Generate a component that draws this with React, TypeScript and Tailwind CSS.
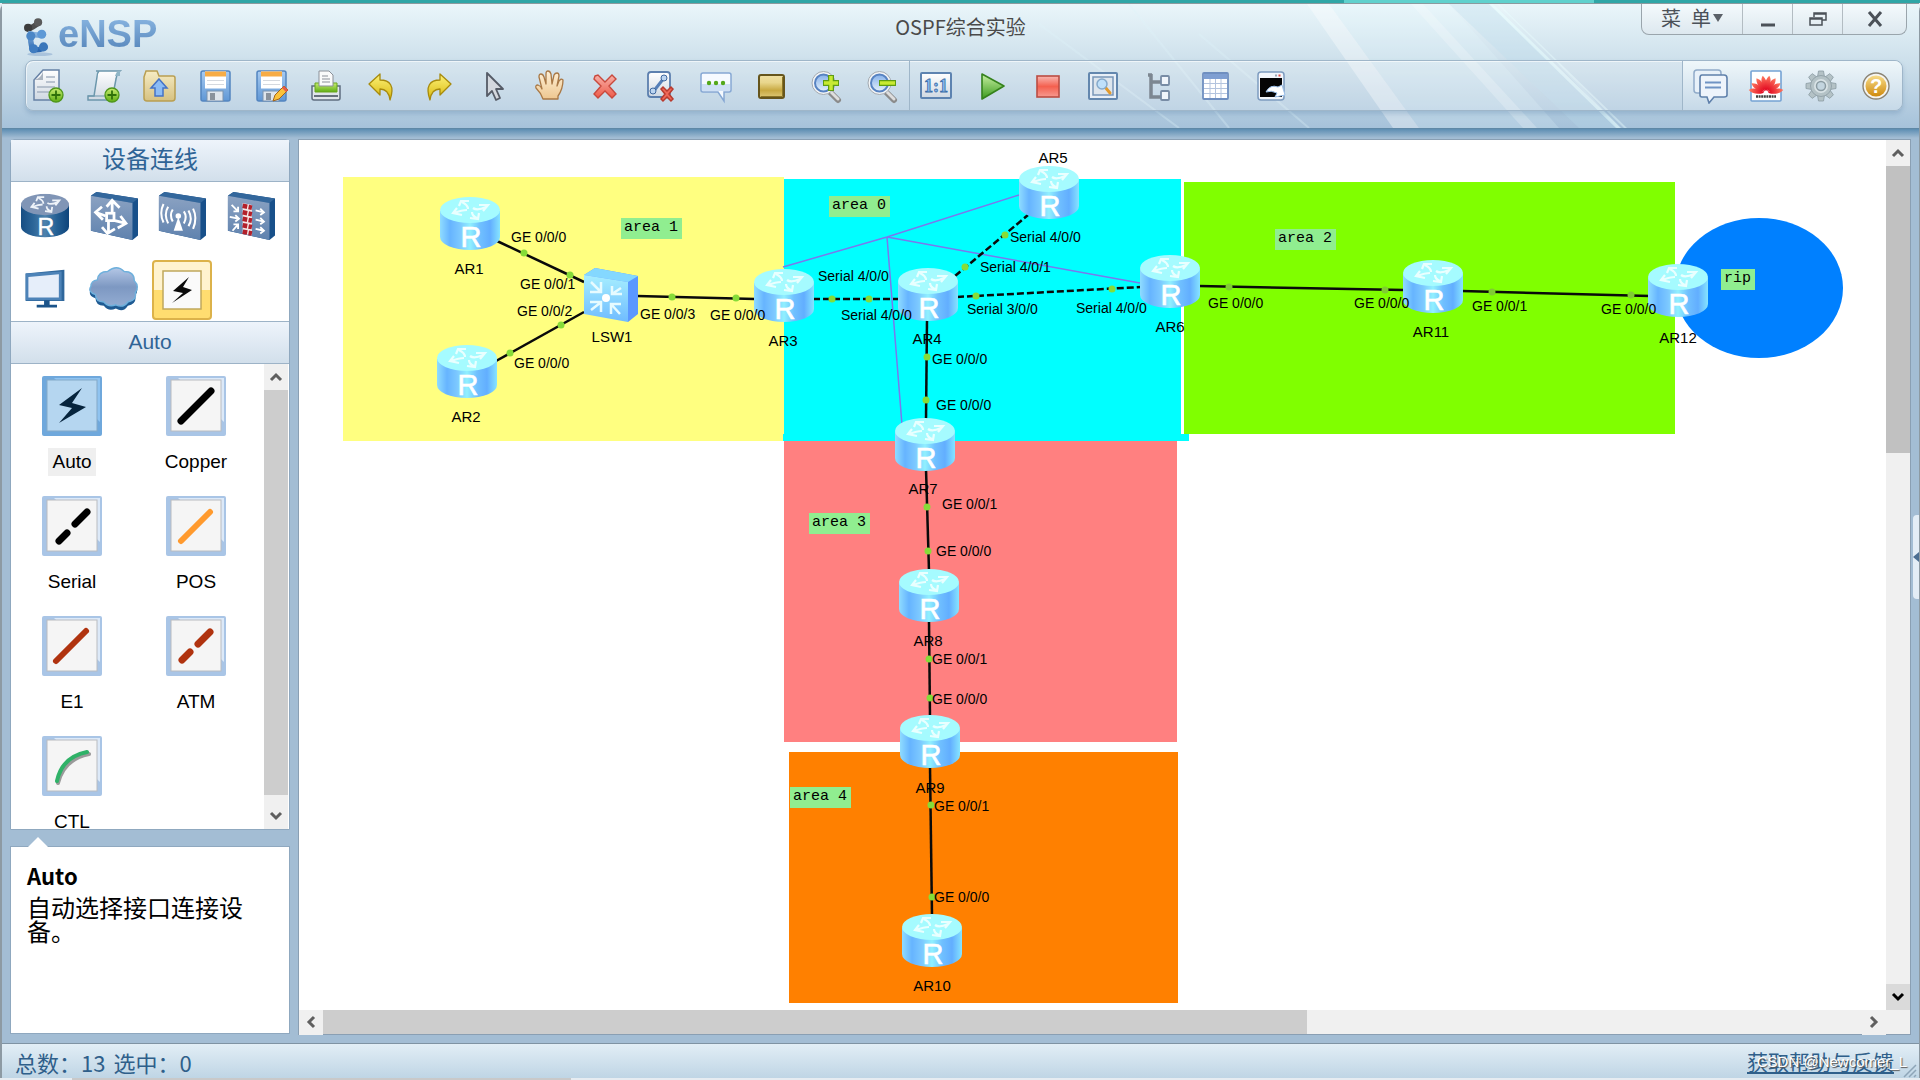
import React from "react";

type Glyph = { name: string; art: React.ReactNode };

/* Gradients shared by every drawing on the page */
function SharedGradients() {
  const vertical = (id: string, stops: string[]) => (
    <linearGradient id={id} x1="0" y1="0" x2="0" y2="1">
      {stops.map((c, i) => (
        <stop key={i} offset={i / (stops.length - 1)} stopColor={c} />
      ))}
    </linearGradient>
  );
  const horizontal = (id: string, stops: string[]) => (
    <linearGradient id={id} x1="0" y1="0" x2="1" y2="0">
      {stops.map((c, i) => (
        <stop key={i} offset={i / (stops.length - 1)} stopColor={c} />
      ))}
    </linearGradient>
  );
  return (
    <svg width="0" height="0" className="absolute" aria-hidden="true">
      <defs>
        {vertical("gPaper", ["#ffffff", "#cfd8e2"])}
        {vertical("gGreen", ["#c8ec70", "#5fae14"])}
        {vertical("gFolder", ["#f6ecc4", "#d6c181"])}
        {vertical("gBlue", ["#a9cbf0", "#5f97d6"])}
        {vertical("gYellow", ["#fdf27a", "#d8b80c"])}
        {vertical("gSkin", ["#fff0d6", "#eec790"])}
        {vertical("gRed", ["#f7b0a8", "#ee5a49"])}
        {vertical("gPlay", ["#c9f0a4", "#3a9a1c"])}
        {vertical("gGold", ["#f0e0a4", "#e8d68c", "#c8a941", "#e0cb7c"])}
        {vertical("gStop", ["#f9b7b1", "#f4604f", "#f79a90"])}
        {vertical("gLens", ["#86b1ea", "#e4f1fb"])}
        {vertical("gHelp", ["#f7dc8a", "#cf8a0d"])}
        {vertical("gHuawei", ["#ff7a60", "#e0001c"])}
        {vertical("gLogo", ["#86b2de", "#2c67b0"])}
        {vertical("gCloud", ["#b4c7e6", "#7d98c2", "#93acd2"])}
        {vertical("gDevice", ["#8ba2c2", "#5f82ae"])}
        {horizontal("gBodyLight", ["#8fdcff", "#66b4ff", "#7cc8ff", "#90f0ff", "#70c0ff", "#62aeff", "#86e4ff"])}
        {horizontal("gBodyDark", ["#174e83", "#2b6598", "#4d82ad", "#245f93", "#0e447b"])}
        {vertical("gSwitchLight", ["#a6eeff", "#6fbcff"])}
      </defs>
    </svg>
  );
}

const disk = (
  <>
    <rect x="4" y="3" width="29" height="30" rx="2" fill="url(#gBlue)" stroke="#5385c0" strokeWidth="1.5" />
    <rect x="8" y="3.500" width="21" height="17" fill="#fff" />
    <rect x="8" y="3.500" width="21" height="5" fill="#f7ac45" />
    <path d="M10 12.500h17M10 16.500h17" stroke="#d5d9df" />
    <rect x="10" y="23" width="16" height="10" fill="#dfe5ec" stroke="#7a93b0" />
    <rect x="13" y="25" width="5" height="7" fill="#8a929c" />
  </>
);
const plusBadge = (
  <>
    <circle cx="26" cy="27" r="7" fill="url(#gGreen)" stroke="#4f961a" strokeWidth="1.300" />
    <path d="M26 22.500v9M21.500 27h9" stroke="#2f7009" strokeWidth="1.800" />
  </>
);
const lens = (
  <>
    <path d="M20 23l9 9" stroke="#8b8b8b" strokeWidth="6" strokeLinecap="round" />
    <path d="M21 23l8 8" stroke="#dedede" strokeWidth="3" strokeLinecap="round" />
    <circle cx="14.500" cy="15" r="11.500" fill="#f2f4f6" stroke="#a2a9b0" />
    <circle cx="14.500" cy="15" r="8.500" fill="url(#gLens)" stroke="#5783c2" strokeWidth="2" />
  </>
);

const editTools: Glyph[] = [
  {
    name: "新建拓扑",
    art: (
      <>
        <path d="M13 2h16v30H4V12z" fill="url(#gPaper)" stroke="#6681a5" strokeWidth="1.500" />
        <path d="M13 2v10H4c5-1 9-5 9-10z" fill="#a9b3bf" />
        <path d="M16 9h9M16 14h9M7 19h18M7 24h12" stroke="#a7b2c2" strokeWidth="1.500" />
        {plusBadge}
      </>
    ),
  },
  {
    name: "新建试卷",
    art: (
      <>
        <path d="M10 3h24q-3 2-4 8l-4 21H2v-4h6L11 9q0-4 2-6z" fill="url(#gPaper)" stroke="#6c97ac" strokeWidth="1.500" />
        <path d="M29 8q2-6 5-5v5z" fill="#8fb5c6" />
        <path d="M2 28h18" stroke="#6c97ac" />
        {plusBadge}
      </>
    ),
  },
  {
    name: "打开",
    art: (
      <>
        <path d="M3 9l2-6h11l2 5h14q2 0 2 2v20q0 3-3 3H6q-3 0-3-3z" fill="url(#gFolder)" stroke="#b99f52" strokeWidth="1.500" />
        <path d="M18 11l8 9h-4v8h-8v-8h-4z" fill="#8cbcf5" stroke="#4573c6" strokeWidth="1.500" />
      </>
    ),
  },
  { name: "保存", art: disk },
  {
    name: "另存为",
    art: (
      <>
        {disk}
        <path d="M20 33l2-6 9-9 4 4-9 9z" fill="#fbc23a" stroke="#a3641a" />
        <path d="M31 18l4 4-2 2-4-4z" fill="#e65b4b" />
      </>
    ),
  },
  {
    name: "打印",
    art: (
      <>
        <path d="M4 18h28v12q0 2-2 2H6q-2 0-2-2z" fill="#e0e5eb" stroke="#5f6d80" strokeWidth="1.500" />
        <path d="M7 15h22v9H7z" fill="url(#gGreen)" stroke="#6ba51f" />
        <path d="M11 3h10l4 4v11H11z" fill="#fafafa" stroke="#8b9098" />
        <path d="M14 8h6M14 11h8M14 14h8" stroke="#8b9098" />
        <path d="M6 28h24" stroke="#66707d" strokeWidth="2" />
      </>
    ),
  },
  {
    name: "撤销",
    art: <path d="M5 16L16 6v6c10 0 15 6 10 20-1-8-4-11-10-11v6z" fill="url(#gYellow)" stroke="#a78a0c" strokeWidth="1.300" strokeLinejoin="round" />,
  },
  {
    name: "恢复",
    art: <path d="M31 16L20 6v6C10 12 5 18 10 32c1-8 4-11 10-11v6z" fill="url(#gYellow)" stroke="#a78a0c" strokeWidth="1.300" strokeLinejoin="round" />,
  },
  {
    name: "选择",
    art: <path d="M12 5v23l5-5 4 9 4-2-4-9h7z" fill="#d4d8de" stroke="#555b66" strokeWidth="1.800" strokeLinejoin="round" />,
  },
  {
    name: "拖动",
    art: (
      <path
        d="M12 31q-2-6-7-11-1-3 2-3 3 1 4 4L8 9q0-3 2-3t3 3l2 7V6q0-3 2-3t3 3l1 10 2-9q1-2 3-2t2 3l-2 10 2-5q2-3 4-1 0 9-5 16v3z"
        fill="url(#gSkin)"
        stroke="#a97845"
        strokeWidth="1.300"
        strokeLinejoin="round"
      />
    ),
  },
  {
    name: "删除",
    art: <path d="M8 8l3-1 7 7 7-7 4 4-7 7 7 8-4 4-7-7-7 7-4-4 7-8-7-7z" fill="url(#gRed)" stroke="#c8493d" strokeWidth="1.400" />,
  },
  {
    name: "删除连线",
    art: (
      <>
        <rect x="6" y="4" width="22" height="25" rx="3" fill="url(#gPaper)" stroke="#5c7fae" strokeWidth="1.800" />
        <path d="M11 24L22 10" stroke="#567fb8" strokeWidth="3" />
        <circle cx="11" cy="23" r="3" fill="#bcd5f1" stroke="#3f689f" />
        <circle cx="22" cy="10" r="3" fill="#bcd5f1" stroke="#3f689f" />
        <path d="M19 21l2-2 4 4 4-4 2 2-4 5 4 5-2 2-4-4-4 4-2-2 4-5z" fill="#ee6758" stroke="#b83a2e" strokeWidth="1.500" />
      </>
    ),
  },
  {
    name: "文本",
    art: (
      <>
        <path d="M5 5h26q2 0 2 2v15q0 2-2 2h-5v9l-6-9H5q-2 0-2-2V7q0-2 2-2z" fill="#f6faff" stroke="#86a8d4" strokeWidth="1.500" />
        <rect x="4" y="16" width="28" height="7" fill="#cfe0f5" />
        <g fill="#54a81c">
          <circle cx="11" cy="15" r="2.200" />
          <circle cx="18" cy="15" r="2.200" />
          <circle cx="25" cy="15" r="2.200" />
        </g>
      </>
    ),
  },
  {
    name: "调色板",
    art: (
      <>
        <rect x="5" y="7" width="25" height="23" rx="2" fill="url(#gGold)" stroke="#66551c" strokeWidth="2" />
        <path d="M7 28.500h21.500V9" fill="none" stroke="#8b7526" />
      </>
    ),
  },
  {
    name: "放大",
    art: (
      <>
        {lens}
        <path d="M22 7v16M14 15h16" stroke="#5f9d13" strokeWidth="6" />
        <path d="M22 8v14M15 15h14" stroke="#c8ea32" strokeWidth="3.500" />
      </>
    ),
  },
  {
    name: "缩小",
    art: (
      <>
        {lens}
        <path d="M14 15h17" stroke="#5f9d13" strokeWidth="6" />
        <path d="M15 15h15" stroke="#c8ea32" strokeWidth="3.500" />
      </>
    ),
  },
];

const runTools: Glyph[] = [
  {
    name: "原始大小",
    art: (
      <>
        <rect x="3" y="5" width="30" height="25" rx="1" fill="url(#gPaper)" stroke="#5d83b0" strokeWidth="2" />
        <text x="18" y="24" textAnchor="middle" fontFamily="Liberation Serif" fontWeight="700" fontSize="18" fill="#8bbcf0" stroke="#3a6ca8" strokeWidth="0.800">
          1:1
        </text>
      </>
    ),
  },
  {
    name: "启动设备",
    art: <path d="M8 6l22 12L8 31z" fill="url(#gPlay)" stroke="#35821c" strokeWidth="1.600" strokeLinejoin="round" />,
  },
  {
    name: "停止设备",
    art: <rect x="7" y="8" width="22" height="21" fill="url(#gStop)" stroke="#bb4d43" strokeWidth="1.600" />,
  },
  {
    name: "数据抓包",
    art: (
      <>
        <rect x="4" y="5" width="28" height="26" rx="1" fill="#e8eff7" stroke="#6387ae" strokeWidth="2" />
        <rect x="8" y="9" width="20" height="18" fill="#dde5ed" stroke="#7896b8" strokeWidth="1.500" />
        <path d="M20 19l5 6" stroke="#e29a2d" strokeWidth="3" strokeLinecap="round" />
        <circle cx="17" cy="16" r="5" fill="#bfe0fa" stroke="#85a9cb" strokeWidth="1.500" />
      </>
    ),
  },
  {
    name: "展示接口",
    art: (
      <>
        <path d="M10 6v23h10M10 14h10M7 7h4" fill="none" stroke="#7d8791" strokeWidth="3.500" />
        <rect x="20" y="8" width="8" height="9" rx="1" fill="#f0f5fb" stroke="#788ca5" strokeWidth="1.800" />
        <rect x="20" y="23" width="8" height="9" rx="1" fill="#f0f5fb" stroke="#788ca5" strokeWidth="1.800" />
      </>
    ),
  },
  {
    name: "显示网格",
    art: (
      <>
        <rect x="6" y="5" width="25" height="26" rx="1" fill="#fff" stroke="#6f8fc0" strokeWidth="1.800" />
        <rect x="7" y="6" width="23" height="5" fill="#7f9fd2" />
        <path d="M7 15.500h23M7 20.500h23M7 25.500h23M13 11v19M18.500 11v19M24 11v19" stroke="#b4c4de" />
      </>
    ),
  },
  {
    name: "打开命令行",
    art: (
      <>
        <rect x="5" y="4" width="26" height="28" rx="3" fill="#f2f6fb" stroke="#7e9cc0" strokeWidth="1.500" />
        <rect x="7" y="10" width="22" height="19" fill="#050505" />
        <path d="M22 7.500h2" stroke="#9aa6b4" strokeWidth="2" />
        <path d="M25.500 7.500h2" stroke="#e64b42" strokeWidth="2" />
        <path d="M13 24q4-8 12-5l4-2 3 10-10 2 2-4q-6-3-11-1z" fill="#fff" stroke="#9cc0ea" />
      </>
    ),
  },
];

const sideTools: Glyph[] = [
  {
    name: "论坛",
    art: (
      <>
        <rect x="1" y="2" width="27" height="23" rx="3" fill="#e8f1f9" stroke="#90abc9" strokeWidth="1.500" />
        <path d="M9 7h22q3 0 3 3v17q0 2-3 2H21l-5 6-2-6H9q-2 0-2-2V10q0-3 2-3z" fill="#eef4fb" stroke="#5f80ab" strokeWidth="1.600" />
        <path d="M12 14.500h16M12 19.500h16" stroke="#6f93c4" strokeWidth="1.800" />
      </>
    ),
  },
  {
    name: "华为官网",
    art: (
      <>
        <rect x="3" y="3" width="30" height="30" rx="1" fill="#fff" stroke="#74a2d4" strokeWidth="1.600" />
        <g fill="url(#gHuawei)">
          {[-80, -56, -33, -11, 11, 33, 56, 80].map((a) => (
            <path key={a} d="M18 23C14.500 17 15 11 18 7.500C21 11 21.500 17 18 23z" transform={`rotate(${a} 18 25)`} />
          ))}
        </g>
        <path d="M8 28.500h20" stroke="#3f3f3f" strokeWidth="2.500" strokeDasharray="2 .6" />
      </>
    ),
  },
  {
    name: "设置",
    art: (
      <>
        <g fill="#b4c2c6" stroke="#8b9ca3" strokeWidth="0.800">
          {[0, 45, 90, 135, 180, 225, 270, 315].map((a) => (
            <path key={a} d="M14.500 9l1-6h5l1 6z" transform={`rotate(${a} 18 18)`} />
          ))}
          <circle cx="18" cy="18" r="10.500" />
        </g>
        <circle cx="18" cy="18" r="7" fill="#d9e3e6" />
        <circle cx="18" cy="18" r="4.500" fill="#c3d5df" stroke="#8b9ca3" strokeWidth="1.500" />
      </>
    ),
  },
  {
    name: "帮助",
    art: (
      <>
        <circle cx="18" cy="18" r="13" fill="#f5f5f2" stroke="#8b8474" strokeWidth="1.400" />
        <circle cx="18" cy="18" r="10.500" fill="url(#gHelp)" />
        <text x="18" y="25" textAnchor="middle" fontFamily="Liberation Sans" fontWeight="700" fontSize="20" fill="#fff">
          ?
        </text>
      </>
    ),
  },
];

function IconButton({ glyph }: { glyph: Glyph }) {
  return (
    <button type="button" aria-label={glyph.name} className="h-9 w-9 shrink-0">
      <svg viewBox="0 0 36 36" className="h-9 w-9">
        {glyph.art}
      </svg>
    </button>
  );
}

function Logo() {
  return (
    <div className="flex items-start gap-0.5 pt-3 pl-5">
      <svg viewBox="0 0 34 44" className="h-10 w-[34px]" aria-hidden="true">
        <ellipse cx="18" cy="42" rx="14" ry="2" fill="#a9c3dc" />
        <path d="M5 14Q10 13 17 7" stroke="#4d4d4d" strokeWidth="6" />
        <circle cx="5" cy="13" r="4.500" fill="#3c3c3c" />
        <circle cx="16" cy="7" r="4.500" fill="#5a5a5a" />
        <path d="M22 20Q16 22 8 20Q7 28 10 37Q17 38 23 35" fill="none" stroke="url(#gLogo)" strokeWidth="6" />
        <circle cx="20" cy="20" r="5" fill="#5e99d6" />
        <circle cx="8" cy="22" r="5" fill="#4a86c6" />
        <circle cx="11" cy="36" r="5" fill="#3f7cc0" />
        <circle cx="22" cy="34" r="5" fill="#3b77ba" />
      </svg>
      <span className="bg-gradient-to-b from-[#8ab6e2] to-[#5685ba] bg-clip-text text-[38px] leading-9 font-bold text-transparent">
        eNSP
      </span>
    </div>
  );
}

function WindowControls() {
  const cell = "flex h-full items-center justify-center border-r border-[#b3bcc2]";
  return (
    <div className="mr-3 flex h-[31px] justify-self-end rounded-b-lg border border-t-0 border-[#9aa5ac] bg-gradient-to-b from-[#f4fafc] to-[#dde8ef] text-[#4b5158]">
      <button type="button" className={`${cell} w-[101px] gap-0.5 pb-0.5 font-['Noto_Sans_CJK_SC',sans-serif] text-xl leading-none`}>
        菜{"\u2002"}单
        <svg viewBox="0 0 10 8" className="h-2 w-2.5" aria-hidden="true">
          <path d="M0 0h10L5 8z" fill="#5b6168" />
        </svg>
      </button>
      <button type="button" aria-label="最小化" className={`${cell} w-[50px]`}>
        <svg viewBox="0 0 16 16" className="mt-1 h-4 w-4">
          <path d="M1 12h14" stroke="#4b5158" strokeWidth="3" />
        </svg>
      </button>
      <button type="button" aria-label="还原" className={`${cell} w-[50px]`}>
        <svg viewBox="0 0 18 16" className="h-4 w-[18px]" fill="none" stroke="#4b5158" strokeWidth="1.500">
          <path d="M5 6V2h12v7h-4M5 3h12" />
          <path d="M1 7h12v7H1zM1 8h12" />
        </svg>
      </button>
      <button type="button" aria-label="关闭" className="flex h-full w-[63px] items-center justify-center">
        <svg viewBox="0 0 16 16" className="h-4 w-4">
          <path d="M2 1l12 14M14 1L2 15" stroke="#4b5158" strokeWidth="3" />
        </svg>
      </button>
    </div>
  );
}

function Header() {
  return (
    <header className="relative border-t border-[#8b9a9e] bg-gradient-to-b from-[#eaf6fa] via-[#cbdeea] to-[#a6c2da] pb-[17px]">
      <svg viewBox="0 0 900 124" preserveAspectRatio="none" className="pointer-events-none absolute top-0 right-0 h-full w-[900px]" aria-hidden="true">
        <path d="M288 0h22l90 124h-26z" fill="#fff" opacity=".35" />
        <path d="M310 0h120l110 124H400z" fill="#e8fbff" opacity=".2" />
        <path d="M392 0h12l114 124h-14z" fill="#fff" opacity=".22" />
        <path d="M430 0h40l130 124H560z" fill="#b8dcea" opacity=".3" />
        <path d="M470 0h4l128 124h-5z" fill="#eaffff" opacity=".5" />
        <path d="M478 0h2l128 124h-3z" fill="#eaffff" opacity=".4" />
        <path d="M20 20l140 104M180 30l110 94M110 0l100 124M540 60l60 64" stroke="#dff4fa" strokeWidth="2" opacity=".3" />
      </svg>
      <div className="relative grid h-14 grid-cols-[1fr_auto_1fr] items-start">
        <Logo />
        <h1 className="pt-[9px] font-['Noto_Sans_CJK_SC',sans-serif] text-xl leading-7 text-[#4a4a4a]">OSPF综合实验</h1>
        <WindowControls />
      </div>
      <div className="relative mr-4 ml-[23px] flex h-[51px] items-center rounded-lg border border-[#9fb6c9] bg-white/20 shadow-[inset_1px_1px_0_rgba(255,255,255,0.6),0_3px_4px_rgba(90,130,170,0.3)]">
        <div className="flex w-[875px] shrink-0 justify-between pl-1">
          {editTools.map((g) => (
            <IconButton key={g.name} glyph={g} />
          ))}
        </div>
        <div className="mr-2 ml-2 h-full w-px shrink-0 bg-[#9fb6c9]" />
        <div className="flex w-[371px] shrink-0 justify-between">
          {runTools.map((g) => (
            <IconButton key={g.name} glyph={g} />
          ))}
        </div>
        <div className="ml-auto flex h-full w-[220px] items-center justify-between rounded-r-lg border-l border-[#9fb6c9] bg-gradient-to-b from-[#eff7fa] to-[#c6d9e8] pr-2 pl-2.5">
          {sideTools.map((g) => (
            <IconButton key={g.name} glyph={g} />
          ))}
        </div>
      </div>
    </header>
  );
}

/* Router symbol: light on the canvas, dark in the palette */
function RouterArt({ dark = false }: { dark?: boolean }) {
  return (
    <>
      <path d="M0 14V40a30 13 0 0 0 60 0V14z" fill={dark ? "url(#gBodyDark)" : "url(#gBodyLight)"} />
      <ellipse cx="30" cy="13" rx="30" ry="13" fill={dark ? "#8095b6" : "#a5fbff"} />
      <g fill="none" stroke={dark ? "#eef3f9" : "#e9ffff"} strokeWidth="2.200">
        <path d="M28 12q0-4-6-7M19 9l2-5 8 0" />
        <path d="M33 11q4 3 13-1M39 8h9l-5 6" />
        <path d="M27 13q-5 0-13 3M17 11l-4 5 9 2" />
        <path d="M32 15q0 4 5 6M30 21l8 1 1-6" />
      </g>
      <text x="31" y="50" textAnchor="middle" fontFamily="Liberation Sans" fontSize="29" fill="#fff" stroke="#fff" strokeWidth="0.600">
        R
      </text>
    </>
  );
}

const darkBox = (
  <>
    <path d="M1 4l6-4 45 7v40l-6 5L1 42z" fill="#18508a" />
    <path d="M1 4l6-4 45 7-6 5z" fill="#33679c" />
    <path d="M1 4l45 8v40L1 42z" fill="url(#gDevice)" />
  </>
);

const categories: Glyph[] = [
  {
    name: "路由器",
    art: (
      <svg viewBox="0 0 60 54" x="0" y="2" width="52" height="48" preserveAspectRatio="none">
        <RouterArt dark />
      </svg>
    ),
  },
  {
    name: "交换机",
    art: (
      <>
        {darkBox}
        <g fill="none" stroke="#fff" strokeWidth="3">
          <path d="M24 22V11M18 16l6-7 8 8M27 31l12 3M33 26l6 8-9 5M20 31v14M13 38l6 7 8-5M17 26L6 22M13 16l-7 6 8 8" />
          <rect x="18" y="23" width="8" height="8" />
        </g>
      </>
    ),
  },
  {
    name: "无线局域网",
    art: (
      <>
        {darkBox}
        <path d="M22 27l5 15H17z" fill="#fff" />
        <circle cx="22" cy="26" r="3" fill="#fff" />
        <path d="M16 19q-4 6 0 13M11 16q-5 8 0 18M6 13q-5 10 0 20M28 21q4 6 0 13M33 20q5 9 0 17M38 18q5 10 0 22" fill="none" stroke="#fff" strokeWidth="2.200" />
      </>
    ),
  },
  {
    name: "防火墙",
    art: (
      <>
        {darkBox}
        <path d="M17 12l10 2v33l-10-2z" fill="#f4e7e7" />
        <path d="M17 15l10 2M17 22l10 2M17 29l10 2M17 36l10 2M17 43l10 2" stroke="#b3202a" strokeWidth="5" strokeDasharray="5 1.500" />
        <path d="M5 14l7 7M12 16v5H7M3 27l10 2M9 25l4 4-4 3M6 42l6-7M7 35h5v5M31 20l9 2M36 18l4 4-4 3M31 30l9 2M36 28l4 4-4 3M31 40l9 2M36 38l4 4-4 3" fill="none" stroke="#fff" strokeWidth="2" />
      </>
    ),
  },
  {
    name: "终端",
    art: (
      <>
        <path d="M5 8l42-4v34H5z" fill="#2f679c" />
        <path d="M5 8l39-2v31H5z" fill="#4d83b8" />
        <path d="M8 12l33-3v25H8z" fill="#e6eefa" />
        <path d="M25 37h6v5h8v3H17v-3h8z" fill="#1b548a" />
      </>
    ),
  },
  {
    name: "其他设备",
    art: (
      <>
        <path
          d="M8 15q1-9 11-9 10-8 18 0 11 0 11 10 6 6 1 13 2 9-8 11-5 8-13 3-8 4-13-3-9 0-9-8-9-3-5-10 0-6 7-7z"
          fill="#1f5b93"
          transform="translate(0 3)"
        />
        <path
          d="M8 15q1-9 11-9 10-8 18 0 11 0 11 10 6 6 1 13 2 8-8 10-5 7-13 3-8 3-13-3-9 0-9-8-9-3-5-9 0-6 7-7z"
          fill="url(#gCloud)"
          stroke="#6fb0dc"
          strokeWidth="1.500"
        />
      </>
    ),
  },
  {
    name: "设备连线",
    art: (
      <>
        <rect x="7" y="7" width="38" height="38" fill="#fafafa" stroke="#c0a85c" strokeWidth="1.500" />
        <path d="M33 13L17 27l10 2-11 10 20-13-9-3z" fill="#0b0b0b" />
      </>
    ),
  },
];

type Cable = { name: string; art: React.ReactNode; selected?: boolean };
const cables: Cable[] = [
  { name: "Auto", selected: true, art: <path d="M40 12L17 29l13 3-13 15 27-16-14-4z" fill="#06243d" /> },
  { name: "Copper", art: <path d="M15 45L45 15" stroke="#000" strokeWidth="7" strokeLinecap="round" /> },
  { name: "Serial", art: <path d="M17 45l8-8M33 28l12-12" stroke="#000" strokeWidth="7" strokeLinecap="round" /> },
  { name: "POS", art: <path d="M15 45L44 16" stroke="#ff9a2e" strokeWidth="6" strokeLinecap="round" /> },
  { name: "E1", art: <path d="M14 45l30-30" stroke="#b0330f" strokeWidth="6" strokeLinecap="round" /> },
  { name: "ATM", art: <path d="M16 44l8-8M32 28l12-12" stroke="#b0330f" strokeWidth="7" strokeLinecap="round" /> },
  {
    name: "CTL",
    art: (
      <g fill="none" strokeLinecap="round">
        <path d="M16 47q6-24 31-29" stroke="#9a9a9a" strokeWidth="4" />
        <path d="M15 45q5-24 30-29" stroke="#2fb268" strokeWidth="4" />
      </g>
    ),
  },
];

const arrows = {
  up: "M3 11l5-5 5 5",
  down: "M3 5l5 5 5-5",
  left: "M11 3L6 8l5 5",
  right: "M5 3l5 5-5 5",
};

function ScrollArrow({ dir, strong = false }: { dir: keyof typeof arrows; strong?: boolean }) {
  const label = { up: "向上滚动", down: "向下滚动", left: "向左滚动", right: "向右滚动" }[dir];
  return (
    <button
      type="button"
      aria-label={label}
      className={`flex h-[26px] w-6 shrink-0 items-center justify-center ${strong ? "bg-[#dadada]" : "bg-[#f0f0f0]"}`}
    >
      <svg viewBox="0 0 16 16" className="h-4 w-4">
        <path d={arrows[dir]} fill="none" stroke={strong ? "#000" : "#5f5f5f"} strokeWidth="3" />
      </svg>
    </button>
  );
}

function PanelTitle({ children }: { children: React.ReactNode }) {
  return (
    <h2 className="h-[42px] shrink-0 border-b border-[#9db3c7] bg-gradient-to-b from-[#eef4fb] to-[#d2dfeb] text-center font-['Liberation_Sans','Noto_Sans_CJK_SC',sans-serif] leading-10 text-[#2f6496]">
      {children}
    </h2>
  );
}

function Sidebar() {
  return (
    <aside className="flex w-[280px] shrink-0 flex-col">
      <section className="flex min-h-0 flex-1 flex-col rounded-t border border-[#8fa8bf] bg-white">
        <PanelTitle>
          <span className="text-2xl leading-10">设备连线</span>
        </PanelTitle>
        <div className="grid shrink-0 grid-cols-4 border-b border-[#9db3c7] pt-1 pr-1">
          {categories.map((c) => {
            const on = c.name === "设备连线";
            return (
              <button
                key={c.name}
                type="button"
                aria-label={c.name}
                aria-pressed={on}
                className={`mb-3.5 flex h-[60px] w-[60px] items-center justify-center justify-self-center rounded-sm nth-[n+5]:mb-px ${
                  on ? "border-2 border-[#dcb24a] bg-gradient-to-b from-[#fff3cf] from-50% to-[#ffdd70] to-50%" : ""
                }`}
              >
                <svg viewBox="0 0 52 52" className={on ? "h-[52px] w-[52px]" : "h-12 w-[52px]"}>
                  {c.art}
                </svg>
              </button>
            );
          })}
        </div>
        <PanelTitle>
          <span className="text-[21px] leading-10">Auto</span>
        </PanelTitle>
        <div className="flex min-h-0 flex-1">
          <ul className="grid min-w-0 flex-1 basis-0 grid-cols-[122px_126px] content-start overflow-hidden">
            {cables.map((c) => (
              <li key={c.name} className="h-[120px] pt-3 last:h-[114px]">
                <button type="button" aria-pressed={!!c.selected} className="flex w-full flex-col items-center gap-3">
                  <svg viewBox="0 0 60 60" className="h-[60px] w-[60px]" aria-hidden="true">
                    <rect width="60" height="60" rx="2" fill={c.selected ? "#6fa8dc" : "#a9c5e6"} />
                    <path d="M12 2h46v44z" fill={c.selected ? "#8fc3f0" : "#dce9f8"} />
                    <rect x="5" y="4" width="50" height="51" fill={c.selected ? "#b5d6f0" : "#f5f5f5"} stroke={c.selected ? "#83a9c8" : "#b9bcc0"} />
                    {c.art}
                  </svg>
                  <span className={`h-7 px-1 text-[19px] leading-7 text-black ${c.selected ? "bg-[#efefef]" : ""}`}>{c.name}</span>
                </button>
              </li>
            ))}
          </ul>
          <div className="mr-px flex flex-col bg-[#f0f0f0]">
            <ScrollArrow dir="up" />
            <div className="w-6 flex-1 bg-[#cdcdcd]" />
            <div className="h-2" />
            <ScrollArrow dir="down" />
          </div>
        </div>
      </section>
      <section className="relative mt-4 mb-px h-[188px] shrink-0 border border-[#8fa8bf] bg-white pt-3.5 pr-10 pl-4 font-['Noto_Sans_CJK_SC',sans-serif] text-black">
        <svg viewBox="0 0 22 12" className="absolute -top-[11px] left-4 h-3 w-[22px]" aria-hidden="true">
          <path d="M0 12L11 1l11 11z" fill="#fff" />
        </svg>
        <h3 className="text-[22px] leading-7 font-bold">Auto</h3>
        <p className="mt-1.5 text-2xl leading-6">自动选择接口连接设备。</p>
      </section>
    </aside>
  );
}

/* Canvas geometry is kept in window coordinates; this is the canvas corner */
const ORIGIN = { x: 299, y: 140 };

const routers = [
  { name: "AR1", x: 470, y: 224, lx: 469, ly: 269 },
  { name: "AR2", x: 467, y: 372, lx: 466, ly: 417 },
  { name: "AR3", x: 784, y: 296, lx: 783, ly: 341 },
  { name: "AR4", x: 928, y: 295, lx: 927, ly: 339 },
  { name: "AR5", x: 1049, y: 193, lx: 1053, ly: 158 },
  { name: "AR6", x: 1170, y: 282, lx: 1170, ly: 327 },
  { name: "AR7", x: 925, y: 445, lx: 923, ly: 489 },
  { name: "AR8", x: 929, y: 596, lx: 928, ly: 641 },
  { name: "AR9", x: 930, y: 742, lx: 930, ly: 788 },
  { name: "AR10", x: 932, y: 941, lx: 932, ly: 986 },
  { name: "AR11", x: 1433, y: 287, lx: 1431, ly: 332 },
  { name: "AR12", x: 1678, y: 291, lx: 1678, ly: 338 },
];

const ports: [string, number, number][] = [
  ["GE 0/0/0", 511, 237],
  ["GE 0/0/1", 520, 284],
  ["GE 0/0/2", 517, 311],
  ["GE 0/0/0", 514, 363],
  ["GE 0/0/3", 640, 314],
  ["GE 0/0/0", 710, 315],
  ["Serial 4/0/0", 818, 276],
  ["Serial 4/0/0", 841, 315],
  ["Serial 3/0/0", 967, 309],
  ["Serial 4/0/0", 1076, 308],
  ["Serial 4/0/0", 1010, 237],
  ["Serial 4/0/1", 980, 267],
  ["GE 0/0/0", 932, 359],
  ["GE 0/0/0", 936, 405],
  ["GE 0/0/0", 1208, 303],
  ["GE 0/0/0", 1354, 303],
  ["GE 0/0/1", 1472, 306],
  ["GE 0/0/0", 1601, 309],
  ["GE 0/0/1", 942, 504],
  ["GE 0/0/0", 936, 551],
  ["GE 0/0/1", 932, 659],
  ["GE 0/0/0", 932, 699],
  ["GE 0/0/1", 934, 806],
  ["GE 0/0/0", 934, 897],
];

const tags: [string, number, number][] = [
  ["area 1", 621, 218],
  ["area 0", 829, 196],
  ["area 2", 1275, 229],
  ["area 3", 809, 513],
  ["area 4", 790, 787],
  ["rip", 1721, 269],
];

type Link = { from: [number, number]; to: [number, number]; dots: [number, number][]; serial?: boolean; faint?: boolean };
const links: Link[] = [
  { from: [497, 241], to: [584, 282], dots: [[524, 253], [570, 275]] },
  { from: [496, 361], to: [584, 312], dots: [[561, 325], [510, 353]] },
  { from: [637, 296], to: [755, 299], dots: [[672, 297], [736, 298]] },
  { from: [813, 299], to: [899, 299], dots: [[832, 299], [869, 299]], serial: true },
  { from: [955, 276], to: [1028, 215], dots: [[965, 267], [1005, 235]], serial: true },
  { from: [957, 297], to: [1141, 287], dots: [[976, 296], [1112, 289]], serial: true },
  { from: [1199, 286], to: [1404, 290], dots: [[1229, 287], [1385, 290]], faint: true },
  { from: [1462, 291], to: [1650, 296], dots: [[1492, 292], [1631, 295]], faint: true },
  { from: [927, 320], to: [926, 420], dots: [[927, 357], [926, 400]] },
  { from: [926, 469], to: [929, 571], dots: [[927, 507], [928, 551]] },
  { from: [929, 621], to: [930, 718], dots: [[929, 659], [930, 698]] },
  { from: [930, 767], to: [932, 916], dots: [[931, 805], [932, 897]] },
];

function Topology() {
  return (
    <div className="relative h-full min-w-0 flex-1 overflow-hidden bg-white">
      <svg viewBox="299 140 1588 870" width="1588" height="870" className="absolute top-0 left-0" aria-hidden="true">
        <rect x="343" y="177" width="441" height="264" fill="#ffff80" />
        <rect x="784" y="179" width="397" height="262" fill="#00ffff" />
        <rect x="783" y="434" width="406" height="7" fill="#00ffff" />
        <rect x="1184" y="182" width="491" height="252" fill="#80ff00" />
        <rect x="784" y="441" width="393" height="301" fill="#ff8080" />
        <rect x="789" y="752" width="389" height="251" fill="#ff8000" />
        <ellipse cx="1759" cy="288" rx="84" ry="70" fill="#0080ff" />
        <path d="M1019 195L887 237L783 267M887 237L1140 283M887 237L902 425" fill="none" stroke="#7a78ee" strokeWidth="1.500" />
        {links.map((l, i) => (
          <g key={i}>
            <line
              x1={l.from[0]}
              y1={l.from[1]}
              x2={l.to[0]}
              y2={l.to[1]}
              stroke="#0a0a0a"
              strokeWidth="2.500"
              strokeDasharray={l.serial ? "7 3" : undefined}
            />
            {l.dots.map(([x, y]) => (
              <circle key={`${x}-${y}`} cx={x} cy={y} r="3.500" fill={l.faint ? "#80cc33" : "#86dc38"} />
            ))}
          </g>
        ))}
      </svg>
      {routers.map((r) => (
        <React.Fragment key={r.name}>
          <button
            type="button"
            aria-label={r.name}
            className="absolute h-[54px] w-[60px] -translate-x-1/2 -translate-y-1/2"
            style={{ left: r.x - ORIGIN.x, top: r.y - ORIGIN.y }}
          >
            <svg viewBox="0 0 60 54" className="h-[54px] w-[60px]">
              <RouterArt />
            </svg>
          </button>
          <span
            className="absolute -translate-x-1/2 -translate-y-1/2 text-[15px] leading-4 text-black"
            style={{ left: r.lx - ORIGIN.x, top: r.ly - ORIGIN.y }}
          >
            {r.name}
          </span>
        </React.Fragment>
      ))}
      <button
        type="button"
        aria-label="LSW1"
        className="absolute h-[54px] w-[54px] -translate-x-1/2 -translate-y-1/2"
        style={{ left: 611 - ORIGIN.x, top: 295 - ORIGIN.y }}
      >
        <svg viewBox="0 0 54 54" className="h-[54px] w-[54px]">
          <path d="M0 7l11-7 43 8v38l-10 8z" fill="#5b98ff" />
          <path d="M0 7l11-7 43 8-10 6z" fill="#84d8ff" />
          <path d="M0 7l44 7v40L0 46z" fill="url(#gSwitchLight)" />
          <circle cx="22" cy="30" r="4" fill="#fff" />
          <path
            d="M7 14l10 10M17 14v10H6M37 20l-9 6M28 18v8h10M7 42l9-7M6 34h11v10M36 46l-9-10M27 46V36h10"
            fill="none"
            stroke="#e6fbff"
            strokeWidth="2.500"
          />
        </svg>
      </button>
      <span
        className="absolute -translate-x-1/2 -translate-y-1/2 text-[15px] leading-4 text-black"
        style={{ left: 612 - ORIGIN.x, top: 337 - ORIGIN.y }}
      >
        LSW1
      </span>
      {ports.map(([text, x, y]) => (
        <span
          key={`${x}-${y}`}
          className="absolute -translate-y-1/2 text-sm leading-4 whitespace-nowrap text-black"
          style={{ left: x - ORIGIN.x, top: y - ORIGIN.y }}
        >
          {text}
        </span>
      ))}
      {tags.map(([text, x, y]) => (
        <span
          key={text}
          className="absolute h-[21px] bg-[#90ee90] pr-1 pl-[3px] font-['Liberation_Mono',monospace] text-[15px] leading-5 whitespace-pre text-black"
          style={{ left: x - ORIGIN.x, top: y - ORIGIN.y }}
        >
          {text}
        </span>
      ))}
    </div>
  );
}

function Workspace() {
  return (
    <main className="flex min-w-0 flex-1 flex-col border border-[#8a9fb3] bg-white">
      <div className="flex min-h-0 flex-1">
        <Topology />
        <div className="flex w-6 shrink-0 flex-col bg-[#f0f0f0]">
          <ScrollArrow dir="up" />
          <div className="h-[33%] w-full bg-[#c1c1c1]" />
          <div className="flex-1" />
          <ScrollArrow dir="down" strong />
        </div>
      </div>
      <div className="flex h-6 shrink-0 items-center bg-[#f0f0f0] pr-6">
        <ScrollArrow dir="left" />
        <div className="h-full w-[62%] bg-[#cdcdcd]" />
        <div className="flex-1" />
        <ScrollArrow dir="right" />
      </div>
    </main>
  );
}

function StatusBar() {
  return (
    <footer className="flex h-[35px] shrink-0 items-start justify-between border-t border-[#7f93a3] bg-gradient-to-b from-[#e2eef6] to-[#bfd5e5] pl-[13px] font-['Noto_Sans_CJK_SC',sans-serif] text-[22px] leading-9 text-[#2f5f8a]">
      <p className="flex gap-2">
        <span>总数：13</span>
        <span>选中：0</span>
      </p>
      <div className="relative flex h-[34px] items-start">
        <a href="#help" className="mr-[25px] text-[21px] leading-[34px] underline">
          获取帮助与反馈
        </a>
        <span className="absolute top-2 right-3 font-['Liberation_Sans',sans-serif] text-[15px] leading-5 whitespace-nowrap text-white [text-shadow:1px_1px_1px_#555]">
          CSDN @Newcomer_L
        </span>
        <svg viewBox="0 0 14 14" className="absolute right-0.5 bottom-0 h-3.5 w-3.5" aria-hidden="true">
          <path d="M1 13L13 1M6 13l7-7M11 13l2-2" stroke="#8ea5b8" strokeWidth="1.500" />
        </svg>
      </div>
    </footer>
  );
}

export default function App() {
  return (
    <div className="flex h-screen min-h-[1080px] flex-col bg-[#e6ecf1] font-['Liberation_Sans','Noto_Sans_CJK_SC',sans-serif]">
      <SharedGradients />
      <div className="flex h-[3px] shrink-0 bg-[#2fa6a6]">
        <div className="ml-[70%] w-[13%] bg-[#5fd1cd]" />
      </div>
      <div className="flex min-h-0 flex-1 flex-col rounded-t-lg border-r border-l-2 border-[#8d9aa3]">
        <Header />
        <div className="relative flex min-h-0 flex-1 gap-2 border-t border-[#5f88a6] bg-[#a3bdd4] bg-[linear-gradient(to_bottom,#5c8db2,#a3bdd4_9px)] pt-2.5 pr-2 pb-2 pl-2">
          <Sidebar />
          <Workspace />
          <button
            type="button"
            aria-label="展开右侧面板"
            className="absolute top-[386px] right-0 flex h-[84px] w-1.5 items-center rounded-l bg-[#e3edf6]"
          >
            <svg viewBox="0 0 6 10" className="h-2.5 w-1.5">
              <path d="M6 0v10L0 5z" fill="#4c6f92" />
            </svg>
          </button>
        </div>
        <StatusBar />
      </div>
      <div className="flex h-0.5 shrink-0 pl-[72px]">
        <div className="w-[27%] bg-[#c9c9c9]" />
      </div>
    </div>
  );
}
